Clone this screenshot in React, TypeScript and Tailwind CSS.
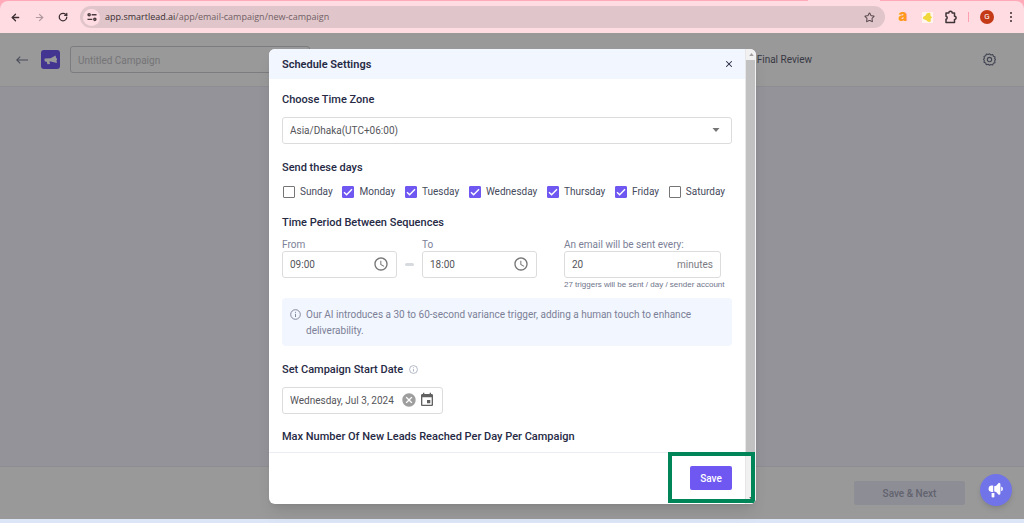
import React from "react";
import { ArrowLeft, ArrowRight, RotateCw, Star, X } from "lucide-react";

const DAYS = [
  { name: "Sunday", on: false },
  { name: "Monday", on: true },
  { name: "Tuesday", on: true },
  { name: "Wednesday", on: true },
  { name: "Thursday", on: true },
  { name: "Friday", on: true },
  { name: "Saturday", on: false },
];

function TuneIcon() {
  return (
    <svg viewBox="0 0 12 12" className="size-[10px]" fill="none" stroke="#4a3b3f" strokeWidth="1.7">
      <circle cx="2.6" cy="3.2" r="1.3" />
      <path d="M5.6 3.2H11.4M0.6 8.8H6.4" />
      <circle cx="9.4" cy="8.8" r="1.3" />
    </svg>
  );
}

function PuzzleIcon() {
  return (
    <svg viewBox="0 0 14 14" className="size-[14px]" fill="none" stroke="#3f3438" strokeWidth="1.5" strokeLinejoin="round">
      <path d="M2 3h2.8a1.7 1.7 0 0 1 3.4 0h2.3v3.2a1.6 1.6 0 0 1 0 3.2v3H2V9.3a1.6 1.6 0 0 0 0-3.1z" />
    </svg>
  );
}

function GearIcon() {
  return (
    <svg viewBox="0 0 24 24" className="size-[13px]" fill="none" stroke="#6b7087" strokeWidth="2" strokeLinejoin="round">
      <path d="M12 1.5l2.6 2.2 3.3-.8 1.3 3.1 3.1 1.3-.8 3.2L23 12l-1.5 2.6.6 3.2-3 1.3-1.3 3-3.3-.7L12 22.6l-2.5-1.8-3.3.8-1.3-3-3.1-1.4.7-3.2L1 12l1.6-2.5-.8-3.2 3.1-1.3 1.3-3.1 3.3.8z" />
      <circle cx="12" cy="12" r="4" />
    </svg>
  );
}

function HornIcon() {
  return (
    <svg viewBox="0 0 14 12" className="h-[12px] w-[14px]" fill="#ffffff">
      <path d="M0.4 5 1 4.6 6.6 4.2 11.6 1.4 12.1 4.1A1.2 1.2 0 0 1 12.5 6.3L12.9 9 6.8 7.4 5.4 7.6 6 9.9 3.4 10.3 2.8 7.8 0.8 7.6Z" />
    </svg>
  );
}

function ChatHornIcon() {
  return (
    <svg viewBox="0 0 16 16" className="size-4" fill="#ffffff">
      <path d="M5.2 3.6H4a3.2 3.2 0 0 0-.4 6.4h1.6z" />
      <path d="M6.2 4.2C8 4 9 3 10.2 1.4a1.2 1.2 0 0 1 2.2.6v9.6a1.2 1.2 0 0 1-2.2.6C9 10.8 8 9.8 6.2 9.6z" />
      <path d="M13.2 4.6a2.4 2.4 0 0 1 0 4.6z" />
      <path d="M3.6 11h2.8v3.2a1.4 1.4 0 0 1-2.8 0z" />
    </svg>
  );
}

function ClockIcon() {
  return (
    <svg viewBox="0 0 24 24" className="size-4 shrink-0" fill="#757575">
      <path d="M11.99 2C6.47 2 2 6.48 2 12s4.47 10 9.99 10C17.52 22 22 17.52 22 12S17.52 2 11.99 2zM12 20c-4.42 0-8-3.58-8-8s3.58-8 8-8 8 3.58 8 8-3.58 8-8 8zm.5-13H11v6l5.25 3.15.75-1.23-4.5-2.67z" />
    </svg>
  );
}

function InfoIcon({ className }: { className: string }) {
  return (
    <svg viewBox="0 0 24 24" className={className} fill="none" stroke="currentColor" strokeWidth="2">
      <circle cx="12" cy="12" r="10.5" />
      <path d="M12 10.5v7M12 6.2v2.2" />
    </svg>
  );
}

function ClearIcon() {
  return (
    <svg viewBox="0 0 24 24" className="size-4" fill="#9e9e9e">
      <path d="M12 2C6.47 2 2 6.47 2 12s4.47 10 10 10 10-4.47 10-10S17.53 2 12 2zm5 13.59L15.59 17 12 13.41 8.41 17 7 15.59 10.59 12 7 8.41 8.41 7 12 10.59 15.59 7 17 8.41 13.41 12 17 15.59z" />
    </svg>
  );
}

function CalendarIcon() {
  return (
    <svg viewBox="0 0 24 24" className="size-4" fill="#616161">
      <path d="M17 12h-5v5h5v-5zM16 1v2H8V1H6v2H5c-1.11 0-1.99.9-1.99 2L3 19c0 1.1.89 2 2 2h14c1.1 0 2-.9 2-2V5c0-1.1-.9-2-2-2h-1V1h-2zm3 18H5V8h14v11z" />
    </svg>
  );
}

function BrowserBar() {
  return (
    <div className="bg-[#ffa9b9]">
      <div className="ml-auto mr-[144px] h-px w-[72px] bg-[#ffdbe2]" />
      <div className="flex h-8 items-center rounded-t-lg bg-[#ffdbe2] pr-2 pl-2">
        <button aria-label="Back" className="flex w-[14px] justify-center">
          <ArrowLeft className="size-[11px] text-[#3a2e32]" strokeWidth={2.75} />
        </button>
        <button aria-label="Forward" className="ml-[10px] flex w-[14px] justify-center">
          <ArrowRight className="size-[11px] text-[#b0999f]" strokeWidth={2.5} />
        </button>
        <button aria-label="Reload" className="ml-[10px] flex w-[14px] justify-center">
          <RotateCw className="size-[10px] text-[#3a2e32]" strokeWidth={3} />
        </button>
        <div className="ml-[10px] flex h-[22px] flex-1 items-center rounded-full bg-[#e0c6cb] pr-[10px] pl-[3px]">
          <span className="flex size-[17px] items-center justify-center rounded-full bg-[#ffdbe2]">
            <TuneIcon />
          </span>
          <p className="ml-[5px] flex-1 font-['Open_Sans',sans-serif] text-[9px] leading-4 text-[#705f64]">
            <span className="text-[#3a2e32]">app.smartlead.ai</span>/app/email-campaign/new-campaign
          </p>
          <button aria-label="Bookmark">
            <Star className="size-[11px] text-[#5b4b50]" strokeWidth={2.25} />
          </button>
        </div>
        <div className="ml-[13px] flex items-center">
          <span className="flex size-[10px] items-center justify-center font-['Inter',sans-serif] text-[15px] leading-[10px] font-black text-[#ff9a1f]">
            <span className="-mt-[3px]">a</span>
          </span>
          <span className="ml-[14px] flex size-[11px] items-center justify-center bg-[#fff4ee]">
            <svg viewBox="0 0 11 11" className="size-[11px]" fill="#f0d83a">
              <path d="M4.8 1.2 8.2 0.8 8.6 4 10.2 5.2 8.8 6.6 8.6 9.8 6 9.8 4.4 8.2 1.2 7 1 5 3.6 3.6z" />
            </svg>
          </span>
          <span className="ml-[11px]">
            <PuzzleIcon />
          </span>
          <span className="ml-[10px] h-[10px] w-px bg-[#ff9fb2]" />
          <span className="ml-[11px] flex size-[14px] items-center justify-center rounded-full bg-[#c43a17] text-[8px] leading-none text-white">
            G
          </span>
          <button aria-label="Menu" className="ml-3 flex w-[10px] flex-col items-center gap-[2px]">
            <span className="size-[2px] rounded-full bg-[#3a2e32]" />
            <span className="size-[2px] rounded-full bg-[#3a2e32]" />
            <span className="size-[2px] rounded-full bg-[#3a2e32]" />
          </button>
        </div>
      </div>
    </div>
  );
}

function TimeField({ id, label, value }: { id: string; label: string; value: string }) {
  return (
    <div className="w-[115px]">
      <label htmlFor={id} className="block text-[10px] leading-3 text-[#7b8096]">
        {label}
      </label>
      <div className="flex h-[27px] items-center rounded-[3px] border border-[#dcdcdc] px-[7px]">
        <input id={id} defaultValue={value} className="w-0 flex-1 pt-[2px] text-[10px] leading-4 text-[#55555a] outline-none" />
        <ClockIcon />
      </div>
    </div>
  );
}

function DayBox({ name, on }: { name: string; on: boolean }) {
  return (
    <label className="flex items-center gap-[5px] text-[10px] leading-4 text-[#454a5c]">
      <span className="grid">
        <input
          type="checkbox"
          defaultChecked={on}
          className="peer col-start-1 row-start-1 size-3 appearance-none rounded-[1px] border border-[#757575] checked:border-[#6e58f1] checked:bg-[#6e58f1]"
        />
        <svg
          viewBox="0 0 12 12"
          className="pointer-events-none invisible col-start-1 row-start-1 size-3 peer-checked:visible"
          fill="none"
          stroke="#ffffff"
          strokeWidth="1.4"
        >
          <path d="M2 6.2 4.6 8.8 10 3.2" />
        </svg>
      </span>
      {name}
    </label>
  );
}

function ScheduleDialog() {
  return (
    <div
      role="dialog"
      aria-labelledby="dialog-title"
      className="relative flex w-[487px] overflow-hidden rounded-md bg-white text-[#262a45] shadow-lg"
    >
      <div className="flex min-w-0 flex-1 flex-col">
        <div className="flex h-[30px] items-center justify-between bg-[#f2f6ff] px-[13px]">
          <h2 id="dialog-title" className="pt-[2px] text-[11px] leading-4 font-semibold">
            Schedule Settings
          </h2>
          <button aria-label="Close" className="-mr-[2px] pt-px">
            <X className="size-[10px]" strokeWidth={2.5} />
          </button>
        </div>

        <div className="px-[13px] pt-[13px] pb-[7px]">
          <label htmlFor="zone" className="block text-[11px] leading-4 font-medium">
            Choose Time Zone
          </label>
          <div className="mt-[9px] grid">
            <select
              id="zone"
              className="col-start-1 row-start-1 h-[27px] appearance-none rounded-[3px] border border-[#dcdcdc] px-[7px] pt-[2px] text-[10px] leading-4 text-[#55555a]"
            >
              <option>Asia/Dhaka(UTC+06:00)</option>
            </select>
            <svg
              viewBox="0 0 8 4"
              className="pointer-events-none col-start-1 row-start-1 mr-3 h-1 w-2 self-center justify-self-end"
              fill="#757575"
            >
              <path d="M0.5 0H7.5L4 4z" />
            </svg>
          </div>

          <h3 className="mt-4 text-[11px] leading-4 font-medium">Send these days</h3>
          <div className="mt-2 mr-[7px] flex justify-between pl-px">
            {DAYS.map((day) => (
              <DayBox key={day.name} name={day.name} on={day.on} />
            ))}
          </div>

          <h3 className="mt-[15px] text-[11px] leading-4 font-medium">Time Period Between Sequences</h3>
          <div className="mt-2 flex">
            <TimeField id="from" label="From" value="09:00" />
            <span className="mx-2 mt-[24px] h-[3px] w-[9px] rounded-full bg-[#d7dbe0]" />
            <TimeField id="to" label="To" value="18:00" />
            <div className="ml-[27px] w-[157px]">
              <label htmlFor="every" className="block text-[10px] leading-3 text-[#7b8096]">
                An email will be sent every:
              </label>
              <div className="flex h-[27px] items-center rounded-[3px] border border-[#dcdcdc] px-[7px]">
                <input
                  id="every"
                  defaultValue="20"
                  className="w-0 flex-1 pt-[2px] text-[10px] leading-4 text-[#55555a] outline-none"
                />
                <span className="pt-[2px] text-[10px] leading-4 text-[#7a7a82]">minutes</span>
              </div>
              <p className="text-right font-['Liberation_Sans',sans-serif] text-[8px] leading-[14px] whitespace-nowrap text-[#6f758b]">
                27 triggers will be sent / day / sender account
              </p>
            </div>
          </div>

          <div className="mt-[6px] flex gap-[5px] rounded bg-[#f2f6ff] px-2 pt-[9px] pb-[7px] text-[10px] leading-4 text-[#7b8096]">
            <InfoIcon className="mt-[2px] size-[11px] shrink-0" />
            <p>Our AI introduces a 30 to 60-second variance trigger, adding a human touch to enhance deliverability.</p>
          </div>

          <div className="mt-4 flex items-center gap-[6px]">
            <label htmlFor="start" className="text-[11px] leading-4 font-medium">
              Set Campaign Start Date
            </label>
            <InfoIcon className="size-[9px] text-[#9aa1b5]" />
          </div>
          <div className="mt-[9px] flex h-[27px] w-[161px] items-center rounded-[3px] border border-[#dcdcdc] px-[7px]">
            <input
              id="start"
              defaultValue="Wednesday, Jul 3, 2024"
              className="w-0 flex-1 pt-[2px] text-[10px] leading-4 text-[#55555a] outline-none"
            />
            <button aria-label="Clear date">
              <ClearIcon />
            </button>
            <button aria-label="Open calendar" className="ml-[2px]">
              <CalendarIcon />
            </button>
          </div>

          <h3 className="mt-[15px] text-[11px] leading-4 font-medium">
            Max Number Of New Leads Reached Per Day Per Campaign
          </h3>
        </div>

        <div className="flex justify-end border-t border-[#eceef6] px-[13px] pt-[13px] pb-[14px]">
          <button className="h-6 w-[42px] rounded-[2px] bg-[#6e58f1] pt-[2px] text-[10px] font-medium text-white">
            Save
          </button>
        </div>
      </div>

      <div className="flex w-[11px] flex-col border-l border-[#e6e6e6] bg-[#f1f1f1]">
        <span className="flex h-[11px] items-center justify-center">
          <svg viewBox="0 0 6 4" className="h-[3px] w-[5px]" fill="#a0a0a0">
            <path d="M3 0 6 4H0z" />
          </svg>
        </span>
        <span className="mr-px flex-1 bg-[#c1c1c1]" />
        <span className="flex h-[52px] items-end justify-center pb-1">
          <svg viewBox="0 0 6 4" className="h-[3px] w-[5px]" fill="#505050">
            <path d="M3 4 6 0H0z" />
          </svg>
        </span>
      </div>

      <div className="pointer-events-none absolute right-px bottom-px h-[51px] w-[87px] border-4 border-[#008559]" />
    </div>
  );
}

export default function App() {
  return (
    <div className="flex min-h-screen flex-col bg-white font-['Roboto',sans-serif]">
      <BrowserBar />
      <div className="relative flex flex-1 flex-col bg-[#f6f6ff]">
        <header className="flex h-[54px] items-center border-b border-[#ececf4] bg-white pr-[28px] pl-4">
          <a href="#campaigns" aria-label="Back to campaigns">
            <svg viewBox="0 0 12 8" className="h-2 w-3" fill="none" stroke="#7b8096" strokeWidth="1.1">
              <path d="M12 4H1M4.2 0.6 0.8 4 4.2 7.4" />
            </svg>
          </a>
          <span className="ml-[13px] flex size-[19px] items-center justify-center rounded-[3px] bg-[#6e58f1]">
            <HornIcon />
          </span>
          <input
            aria-label="Campaign name"
            placeholder="Untitled Campaign"
            className="ml-[10px] h-[27px] w-[240px] rounded-[3px] border border-[#cfcfd4] px-[7px] pt-[2px] text-[10px] placeholder:text-[#c3c3c8]"
          />
          <span className="ml-auto pt-px text-[10px] leading-4 text-[#5d6172]">Final Review</span>
          <button aria-label="Settings" className="ml-[171px]">
            <GearIcon />
          </button>
        </header>
        <main className="flex-1" />
        <footer className="flex h-[53px] items-center justify-end border-t border-[#ececf4] bg-white pr-[59px]">
          <button className="h-6 w-[111px] rounded-[2px] bg-[#ecebf8] text-[10px] font-medium text-[#a3a6b8]">
            Save &amp; Next
          </button>
        </footer>
        <div className="absolute inset-0 flex items-center justify-center bg-black/40 pl-px">
          <ScheduleDialog />
        </div>
        <button
          aria-label="Announcements"
          className="absolute right-3 bottom-[13px] flex size-8 items-center justify-center rounded-full bg-[#7174e8] shadow-md"
        >
          <ChatHornIcon />
        </button>
      </div>
      <div className="h-1 bg-[#dce5f5]" />
    </div>
  );
}
